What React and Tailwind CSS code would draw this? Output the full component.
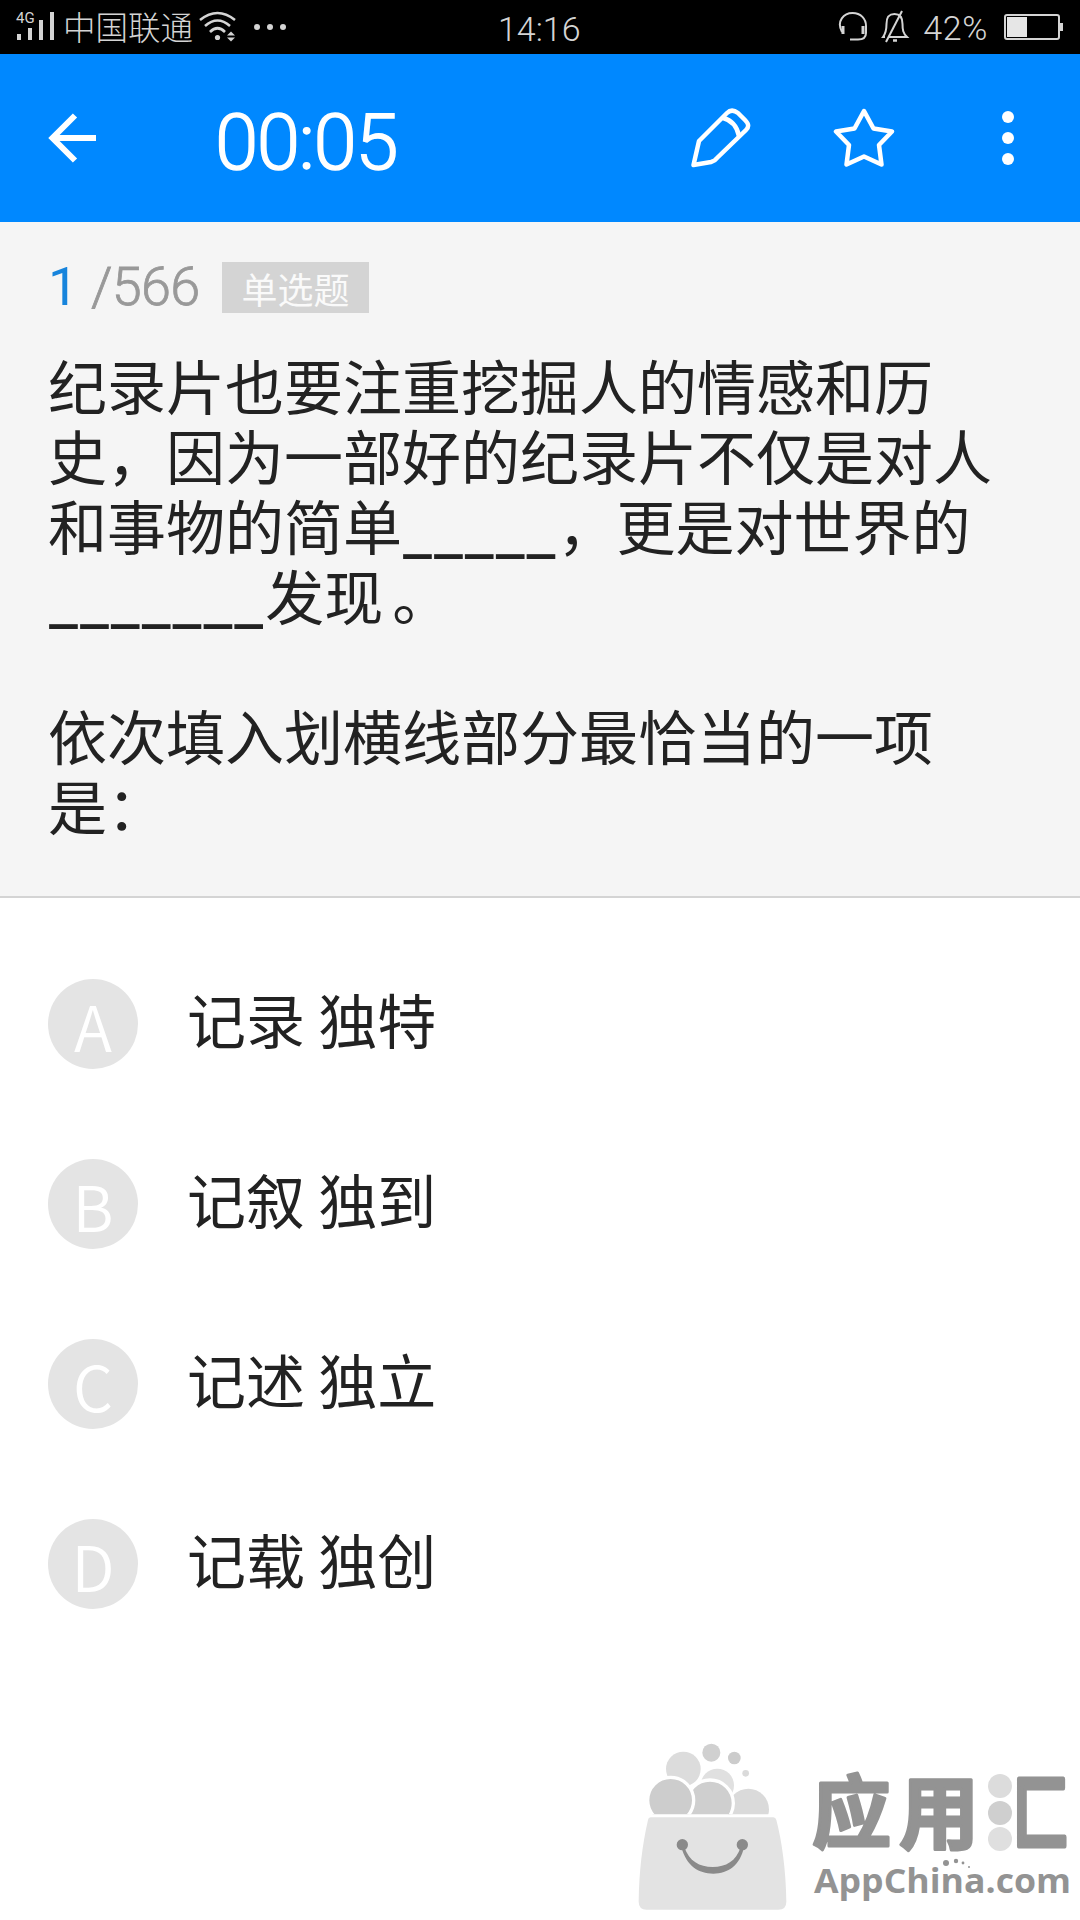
import React, { useState } from 'react';

const OPTIONS = [
  { key: 'A', text: '记录 独特' },
  { key: 'B', text: '记叙 独到' },
  { key: 'C', text: '记述 独立' },
  { key: 'D', text: '记载 独创' },
];

function SignalIcon() {
  return (
    <svg width="40" height="32" viewBox="0 0 40 32" fill="#d4d4d4" className="overflow-visible">
      <text x="0" y="12" fontSize="15" fontFamily="Roboto, sans-serif">4G</text>
      <rect x="1" y="23" width="4" height="6" />
      <rect x="12" y="17" width="4" height="12" />
      <rect x="23" y="9" width="4" height="20" />
      <rect x="34" y="1" width="4" height="28" />
    </svg>
  );
}

function WifiIcon() {
  return (
    <svg width="38" height="32" viewBox="0 0 38 32" fill="none" stroke="#d4d4d4" strokeWidth="2.6">
      <path d="M1 9 Q18.500 -5 36 9" />
      <path d="M6 15 Q18.500 4 31 15" />
      <path d="M11 21 Q18.500 13.500 26 21" />
      <circle cx="18.500" cy="26.500" r="2.600" fill="#d4d4d4" stroke="none" />
      <path d="M28 24.500 l4 -4 l4 4z M28 26.500 l4 4 l4 -4z" fill="#d4d4d4" stroke="none" />
    </svg>
  );
}

function HeadsetIcon() {
  return (
    <svg width="32" height="32" viewBox="0 0 32 32" fill="none" stroke="#d4d4d4" strokeWidth="2">
      <path d="M4 21 C-2 10 6 2 14.500 2 C23 2 28 8 28 15 V22 C28 27 25 28.500 20 28.500 H12" />
      <path d="M5 15 V23 M25 15 V23" strokeWidth="3" />
    </svg>
  );
}

function BellOffIcon() {
  return (
    <svg width="30" height="34" viewBox="0 0 30 34" fill="none" stroke="#d4d4d4" strokeWidth="2">
      <path d="M8 27 H27 C23 23 22.500 20 22.500 14 C22.500 7 20 4 14.500 4 C8 4 6.500 8 6.500 14 C6.500 20 6 23 3 27 L5 27" />
      <path d="M22 1 L6 32" />
      <path d="M13 30.500 h4" strokeWidth="2.500" />
    </svg>
  );
}

function StatusBar() {
  return (
    <div className="flex h-[54px] items-center bg-black font-['Roboto','Noto_Sans_CJK_SC',sans-serif] text-[#d4d4d4]">
      <div className="flex w-[501px] items-center pl-4">
        <SignalIcon />
        <span className="ml-[7px] pt-[4px] text-[32.500px] leading-none font-light">中国联通</span>
        <span className="ml-[6px]"><WifiIcon /></span>
        <span className="ml-[17px] flex gap-[7px]">
          <i className="size-[6px] rounded-full bg-[#d4d4d4]" />
          <i className="size-[6px] rounded-full bg-[#d4d4d4]" />
          <i className="size-[6px] rounded-full bg-[#d4d4d4]" />
        </span>
      </div>
      <span className="-ml-[3px] pt-[3px] text-[34px] leading-none font-light">14:16</span>
      <div className="ml-auto flex items-center pr-[16px]">
        <HeadsetIcon />
        <span className="ml-[10px]"><BellOffIcon /></span>
        <span className="ml-[13px] pt-[2px] text-[34px] leading-none font-light tracking-[0.6px]">42%</span>
        <svg className="ml-[16px]" width="60" height="28" viewBox="0 0 60 28">
          <rect x="1" y="2" width="54" height="24" rx="2" fill="none" stroke="#d4d4d4" strokeWidth="2" />
          <rect x="3" y="4" width="20" height="20" fill="#e6e6e6" />
          <rect x="56" y="10" width="3" height="8" fill="#d4d4d4" />
        </svg>
      </div>
    </div>
  );
}

function Header({ starred, onStar }) {
  return (
    <header className="flex h-[168px] items-center bg-[#0088ff] text-white">
      <button className="ml-[48px]">
        <svg width="49" height="50" viewBox="0 0 49 50" fill="none" stroke="currentColor" strokeWidth="6">
          <path d="M48 25 H4 M27 2.500 L4.500 25 L27 47.500" />
        </svg>
      </button>
      <span className="ml-[118px] pt-[10px] font-['Roboto',sans-serif] text-[78px] leading-none font-light tracking-[-1.500px] [-webkit-text-stroke:1.4px_white]">00:05</span>
      <div className="ml-auto flex items-center pr-[66px]">
        <button>
          <svg width="62" height="62" viewBox="0 0 62 62" fill="none" stroke="currentColor" strokeWidth="4.500" strokeLinejoin="round">
            <path d="M3.500 58 L9 34 L37 6 C40 3 44 3 48 6 L55 13 C59 17 59 20 56 23 L27 51 Q25 54 21 55 Z" />
            <path d="M33 11 C41 13 47 19 49 29" />
          </svg>
        </button>
        <button className="ml-[81px]" onClick={onStar}>
          <svg width="62" height="62" viewBox="0 0 62 62" fill={starred ? 'currentColor' : 'none'} stroke="currentColor" strokeWidth="4.500" strokeLinejoin="round">
            <path d="M31 4 L40.500 21.500 L59 24.500 L46 38 L48.500 57.500 L31 49.500 L13.500 57.500 L16 38 L3 24.500 L21.500 21.500 Z" />
          </svg>
        </button>
        <button className="ml-[107px] flex flex-col gap-[9px]">
          <i className="size-[12px] rounded-full bg-white" />
          <i className="size-[12px] rounded-full bg-white" />
          <i className="size-[12px] rounded-full bg-white" />
        </button>
      </div>
    </header>
  );
}

// fill-in blank, drawn with separated underscores
function Blank({ children }) {
  return <span className="ml-px align-[-4px] font-['Roboto',sans-serif] text-[64px] leading-[0] tracking-[2px]">{children}</span>;
}

function Question() {
  return (
    <section className="h-[676px] border-b-2 border-[#d4d4d4] bg-[#f5f5f5] px-[48px] pt-[35px]">
      <div className="flex h-[60px] items-center text-[54px] leading-none">
        <span className="w-[43px] font-['Roboto',sans-serif] text-[#1784dc]">1</span>
        <span className="w-[131px] font-['Roboto',sans-serif] font-light tracking-[-0.700px] text-[#999999] [-webkit-text-stroke:0.8px_#999999]">/566</span>
        <span className="flex h-[51px] w-[147px] items-center justify-center bg-[#d4d4d4] pt-[2px] text-[36px] text-[#fafafa]">单选题</span>
      </div>
      <div className="mt-[33px] text-[59px] leading-[70px] whitespace-nowrap text-[#222222]">
        <p>纪录片也要注重挖掘人的情感和历</p>
        <p>史，因为一部好的纪录片不仅是对人</p>
        <p>和事物的简单<Blank>_____</Blank>，更是对世界的</p>
        <p><Blank>_______</Blank>发现<span className="ml-[9px]">。</span></p>
        <p className="mt-[70px]">依次填入划横线部分最恰当的一项</p>
        <p>是：</p>
      </div>
    </section>
  );
}

function Options({ onSelect }) {
  return (
    <ul className="flex flex-col gap-[90px] pt-[81px] pl-[48px]">
      {OPTIONS.map((o) => (
        <li key={o.key} className="flex h-[90px] items-center" onClick={() => onSelect(o.key)}>
          <span className="flex size-[90px] items-center justify-center rounded-full bg-[#e4e4e4] text-[63px] leading-none font-[350] text-white">
            {o.key}
          </span>
          <span className="ml-[49px] pb-[11px] text-[59px] leading-[70px] text-[#222222]">{o.text}</span>
        </li>
      ))}
    </ul>
  );
}

function BagLogo() {
  return (
    <svg width="200" height="200" viewBox="0 0 600 600">
      <defs>
        <clipPath id="bagTop">
          <rect x="0" y="0" width="600" height="283" />
        </clipPath>
      </defs>
      <g clipPath="url(#bagTop)">
        <circle cx="190" cy="147" r="52" fill="#dcdcdc" />
        <circle cx="274" cy="98" r="27" fill="#d0d0d0" />
        <circle cx="343" cy="114" r="19" fill="#cccccc" />
        <circle cx="377" cy="160" r="10" fill="#dadada" />
        <circle cx="292" cy="196" r="50" fill="#e0e0e0" />
        <circle cx="385" cy="268" r="62" fill="#dadada" />
        <circle cx="270" cy="250" r="70" fill="#cfcfcf" stroke="#fff" strokeWidth="10" />
        <circle cx="152" cy="241" r="69" fill="#cdcdcd" stroke="#fff" strokeWidth="10" />
      </g>
      <path d="M92 292 H460 Q467 292 469 300 C485 360 498 450 499 545 Q499 569 475 569 H80 Q56 569 56 545 C58 450 66 380 84 300 Q85 292 92 292Z" fill="#e3e3e3" />
      <circle cx="187" cy="374" r="17" fill="#8a8a8a" />
      <circle cx="367" cy="374" r="17" fill="#8a8a8a" />
      <path d="M184 382 C200 438 235 461 280 461 C325 461 360 436 372 382 L362 382 C348 424 318 441 278 441 C238 441 208 424 193 382Z" fill="#8a8a8a" />
    </svg>
  );
}

function Wordmark() {
  return (
    <svg width="270" height="190" viewBox="0 -40 270 190" fill="#939393">
      <g fontFamily="'Noto Sans CJK SC', sans-serif" fontWeight="700" stroke="#939393" strokeWidth="3" strokeLinejoin="round">
        <text x="2" y="81.500" fontSize="79">应</text>
        <text x="89" y="82" fontSize="80">用</text>
        <text x="203" y="82.500" fontSize="81" strokeWidth="5" textLength="56" lengthAdjust="spacingAndGlyphs">匚</text>
      </g>
      <circle cx="190" cy="26" r="12" fill="#dcdcdc" />
      <circle cx="190" cy="53" r="12" fill="#cfcfcf" />
      <circle cx="190" cy="79" r="12" fill="#dfdfdf" />
      <text x="4" y="133" fontSize="34" fontWeight="700" fontFamily="'Open Sans', 'Noto Sans', sans-serif" textLength="257" lengthAdjust="spacingAndGlyphs">AppChina.com</text>
      <circle cx="136" cy="103" r="3" />
      <circle cx="146" cy="101" r="2.200" />
      <circle cx="153" cy="103" r="1.400" />
      <circle cx="159" cy="107" r="1" />
    </svg>
  );
}

export default function App() {
  const [starred, setStarred] = useState(false);
  const [, setAnswer] = useState(null);

  return (
    <div className="flex h-[1920px] w-[1080px] flex-col overflow-hidden bg-white font-['Noto_Sans_CJK_SC',sans-serif]">
      <StatusBar />
      <Header starred={starred} onStar={() => setStarred(!starred)} />
      <Question />
      <Options onSelect={setAnswer} />
      <footer className="mt-auto flex h-[200px] shrink-0 pl-[620px]">
        <BagLogo />
        <div className="-ml-[10px]">
          <Wordmark />
        </div>
      </footer>
    </div>
  );
}
